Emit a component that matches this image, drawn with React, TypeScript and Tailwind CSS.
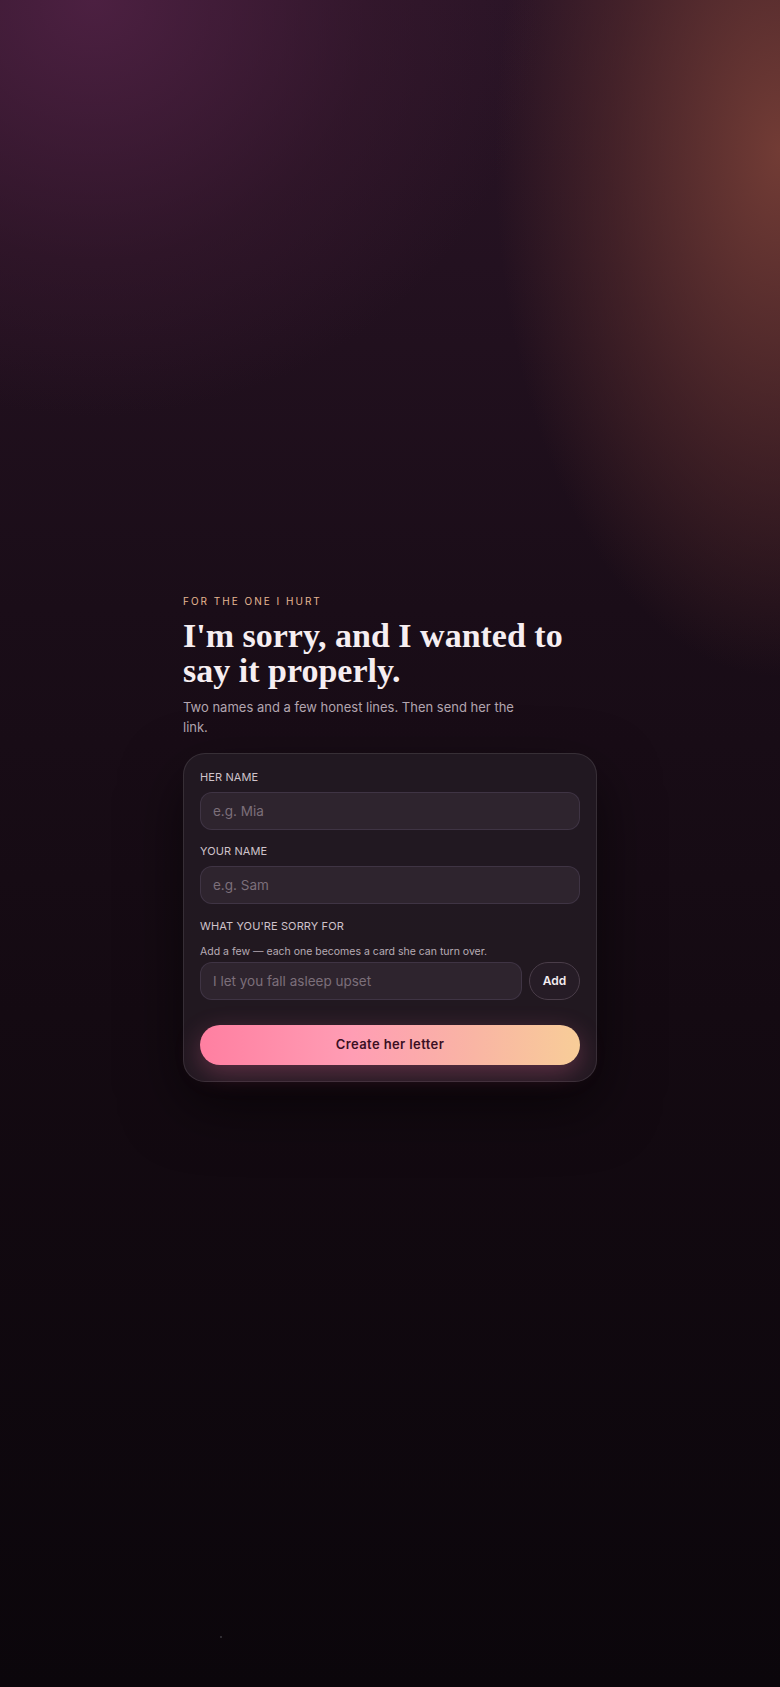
import React from "react";

export default function App() {
  return (
    <div
      className="relative min-h-[1687px] w-full overflow-hidden bg-[#0b060b] bg-[radial-gradient(ellipse_380px_700px_at_100%_9%,rgba(118,62,54,0.95),rgba(90,45,45,0.55)_45%,transparent_75%),radial-gradient(ellipse_560px_520px_at_12%_0%,rgba(82,34,70,0.85),rgba(60,26,50,0.45)_50%,transparent_80%),linear-gradient(to_bottom,#2a1426_0%,#1a0d18_36%,#140a12_60%,#0b060b_100%)]"
      style={{ fontFamily: "Inter, 'Noto Sans', sans-serif" }}
    >
      <div className="flex justify-center pt-[594px]">
        <div className="flex w-[414px] flex-col">
          <p className="text-[10px] leading-[14px] tracking-[0.2em] text-[#e6b792]">
            FOR THE ONE I HURT
          </p>
          <h1
            className="mt-[10px] text-[34px] font-bold leading-[35px] text-[#f6eef1]"
            style={{ fontFamily: "'Liberation Serif', 'DejaVu Serif', serif" }}
          >
            I'm sorry, and I wanted to say it properly.
          </h1>
          <p className="mt-[10px] max-w-[340px] text-[13px] leading-[19.5px] text-[#b3a6b0]">
            Two names and a few honest lines. Then send her the link.
          </p>

          <div className="mt-[16px] rounded-[22px] border border-white/10 bg-[#221922]/90 p-4 shadow-[0_24px_60px_rgba(0,0,0,0.55)]">
            <label className="block text-[11px] leading-[14px] tracking-[0.01em] text-[#cfc3cb]">
              HER NAME
            </label>
            <input
              placeholder="e.g. Mia"
              className="mt-2 block h-[38px] w-full rounded-xl border border-[#44384a]/80 bg-[#2e242e] px-3 text-[13.5px] text-[#e9dfe6] outline-none placeholder:text-[#7c6f7a]"
            />

            <label className="mt-[14px] block text-[11px] leading-[14px] tracking-[0.01em] text-[#cfc3cb]">
              YOUR NAME
            </label>
            <input
              placeholder="e.g. Sam"
              className="mt-2 block h-[38px] w-full rounded-xl border border-[#44384a]/80 bg-[#2e242e] px-3 text-[13.5px] text-[#e9dfe6] outline-none placeholder:text-[#7c6f7a]"
            />

            <label className="mt-[15px] block text-[11px] leading-[14px] tracking-[0.01em] text-[#cfc3cb]">
              WHAT YOU'RE SORRY FOR
            </label>
            <p className="mt-[12px] text-[10.5px] leading-[14px] text-[#b8acb5]">
              Add a few — each one becomes a card she can turn over.
            </p>
            <div className="mt-[3px] flex gap-[7px]">
              <input
                placeholder="I let you fall asleep upset"
                className="block h-[38px] min-w-0 flex-1 rounded-xl border border-[#44384a]/80 bg-[#2e242e] px-3 text-[13.5px] text-[#e9dfe6] outline-none placeholder:text-[#7c6f7a]"
              />
              <button className="h-[38px] w-[51px] rounded-full border border-[#4a3d49] bg-[#261c26] text-[12px] font-semibold text-[#f4ecf0]">
                Add
              </button>
            </div>

            <button className="mt-[25px] block h-[40px] w-full rounded-full bg-[linear-gradient(90deg,#ff7fa1_0%,#ff9db4_40%,#f9b5a4_72%,#f8cd98_100%)] text-[13px] font-semibold tracking-[0.03em] text-[#3b0f23] shadow-[0_8px_26px_rgba(255,110,160,0.28)]">
              Create her letter
            </button>
          </div>
        </div>
      </div>
      <div className="absolute left-[220px] top-[1636px] h-[2px] w-[2px] rounded-full bg-[#3d3a3f]" />
    </div>
  );
}
